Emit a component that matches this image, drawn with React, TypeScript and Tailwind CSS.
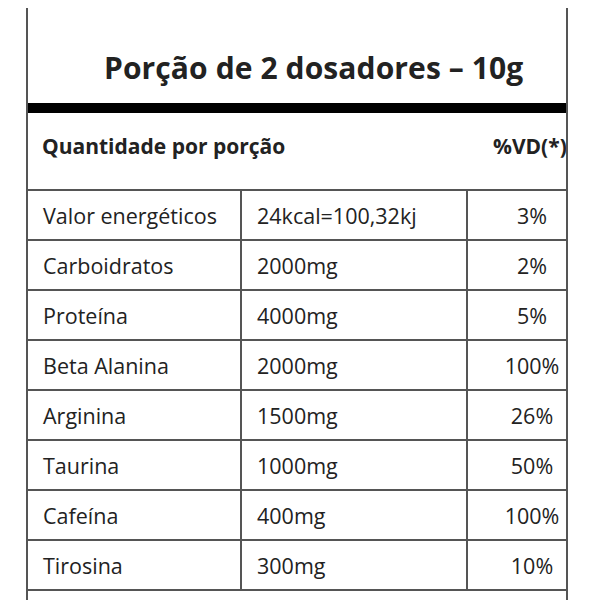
import React from "react";

const rows: [string, string, string][] = [
  ["Valor energéticos", "24kcal=100,32kj", "3%"],
  ["Carboidratos", "2000mg", "2%"],
  ["Proteína", "4000mg", "5%"],
  ["Beta Alanina", "2000mg", "100%"],
  ["Arginina", "1500mg", "26%"],
  ["Taurina", "1000mg", "50%"],
  ["Cafeína", "400mg", "100%"],
  ["Tirosina", "300mg", "10%"],
];

export default function App() {
  return (
    <div className="w-[600px] h-[600px] bg-white overflow-hidden pt-[8px] text-[#222]" style={{ fontFamily: '"Open Sans", "Noto Sans", sans-serif' }}>
      <div className="ml-[26px] w-[542px] h-[600px] border-l-2 border-r-2 border-[#555]">
        <div className="h-[95px] flex items-end pb-[20px] pl-[76px]">
          <div className="text-[30px] font-bold tracking-[0.1px] text-[#222] leading-none whitespace-nowrap">
            Porção de 2 dosadores – 10g
          </div>
        </div>
        <div className="h-[10px] bg-black" />
        <div className="h-[78px] border-b-2 border-[#555] relative overflow-hidden">
          <div className="absolute left-[14px] top-[23px] text-[21px] leading-none font-bold whitespace-nowrap">Quantidade por porção</div>
          <div className="absolute left-[465px] top-[23px] text-[21px] leading-none font-bold whitespace-nowrap">%VD(*)</div>
        </div>
        {rows.map(([a, b, c]) => (
          <div key={a} className="h-[50px] flex border-b-2 border-[#555] text-[21.5px] leading-none">
            <div className="w-[214px] border-r-2 border-[#555] flex items-center pl-[15px] pt-[2px]">{a}</div>
            <div className="w-[226px] border-r-2 border-[#555] flex items-center pl-[15px] pt-[2px]">{b}</div>
            <div className="flex-1 flex items-center justify-center pl-[30px] pt-[2px]">{c}</div>
          </div>
        ))}
      </div>
    </div>
  );
}
